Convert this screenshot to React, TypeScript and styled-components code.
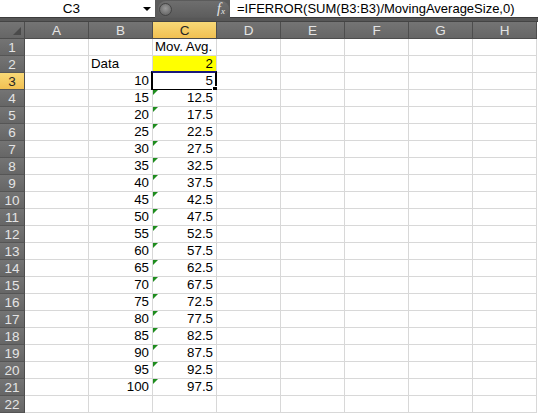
import React from 'react'
import styled, { createGlobalStyle, css } from 'styled-components'

const GlobalStyle = createGlobalStyle`
	html, body {
		margin: 0;
		padding: 0;
		background: #ffffff;
	}
	body {
		font-family: 'Liberation Sans', Arial, sans-serif;
	}
`

const COLUMNS = ['A', 'B', 'C', 'D', 'E', 'F', 'G', 'H']
const ROW_COUNT = 22

type CellData = {
	text: string
	align?: 'left' | 'right'
	highlight?: boolean
	selected?: boolean
	flagged?: boolean
}

function buildCells(): Record<string, CellData> {
	const cells: Record<string, CellData> = {
		C1: { text: 'Mov. Avg.', align: 'left' },
		B2: { text: 'Data', align: 'left' },
		C2: { text: '2', align: 'right', highlight: true },
	}
	for (let i = 0; i < 19; i++) {
		const row = i + 3
		const value = (i + 2) * 5
		cells['B' + row] = { text: String(value), align: 'right' }
		const avg = i === 0 ? 5 : value - 2.5
		cells['C' + row] = {
			text: String(avg),
			align: 'right',
			selected: row === 3,
			flagged: row > 3,
		}
	}
	return cells
}

const cells = buildCells()

export default function App() {
	const rows = Array.from({ length: ROW_COUNT }, (_, i) => i + 1)
	return (
		<>
			<GlobalStyle />
			<Window>
				<FormulaBar>
					<NameBox>
						<NameText>C3</NameText>
						<DropArrow />
					</NameBox>
					<FormulaTools>
						<Pill>
							<PillKnob />
							<Fx>
								f<sub>x</sub>
							</Fx>
						</Pill>
					</FormulaTools>
					<FormulaInput>=IFERROR(SUM(B3:B3)/MovingAverageSize,0)</FormulaInput>
				</FormulaBar>
				<Divider />
				<Sheet>
					<Corner />
					{COLUMNS.map((c) => (
						<ColHeader key={c} $active={c === 'C'}>
							{c}
						</ColHeader>
					))}
					{rows.map((r) => (
						<React.Fragment key={r}>
							<RowHeader $active={r === 3}>{r}</RowHeader>
							{COLUMNS.map((c) => {
								const cell = cells[c + r]
								return (
									<Cell
										key={c + r}
										$align={cell?.align ?? 'left'}
										$highlight={!!cell?.highlight}
										$flagged={!!cell?.flagged}
									>
										{cell?.text}
										{cell?.selected && (
											<Selection>
												<FillHandle />
											</Selection>
										)}
									</Cell>
								)
							})}
						</React.Fragment>
					))}
				</Sheet>
			</Window>
		</>
	)
}

const Window = styled.div`
	width: 538px;
	height: 414px;
	overflow: hidden;
	background: #ffffff;
`

const FormulaBar = styled.div`
	display: flex;
	height: 18px;
	background: #5b5b5b;
`

const NameBox = styled.div`
	width: 155px;
	background: #ffffff;
	border-bottom: 1px solid #3c3c3c;
	box-sizing: border-box;
	display: flex;
	align-items: center;
	font-size: 13.5px;
	color: #000;
`

const NameText = styled.span`
	flex: 1;
	text-align: center;
`

const DropArrow = styled.span`
	width: 0;
	height: 0;
	border-left: 4px solid transparent;
	border-right: 4px solid transparent;
	border-top: 4px solid #000;
	margin-right: 4px;
`

const FormulaTools = styled.div`
	width: 75px;
	display: flex;
	align-items: center;
	background: #5b5b5b;
`

const Pill = styled.div`
	display: flex;
	align-items: center;
	justify-content: space-between;
	height: 16px;
	width: 71px;
	margin-left: 3px;
	border-radius: 8px;
	background: linear-gradient(#6e6e6e, #5d5d5d);
	box-sizing: border-box;
	padding: 0 4px 0 1px;
`

const PillKnob = styled.span`
	width: 13px;
	height: 13px;
	border-radius: 50%;
	background: radial-gradient(circle at 50% 40%, #9a9a9a, #5a5a5a);
	border: 1px solid #444;
	box-sizing: border-box;
`

const Fx = styled.span`
	font-family: 'Liberation Serif', 'Times New Roman', serif;
	font-style: italic;
	font-size: 14px;
	color: #e8e8e8;
	line-height: 1;

	sub {
		font-size: 9px;
		vertical-align: -1px;
	}
`

const FormulaInput = styled.div`
	flex: 1;
	background: #ffffff;
	border-bottom: 1px solid #3c3c3c;
	box-sizing: border-box;
	font-size: 13px;
	line-height: 17px;
	padding-left: 7px;
	color: #000;
	white-space: nowrap;
	overflow: hidden;
`

const Divider = styled.div`
	height: 4px;
	background: #575757;
	border-bottom: 1px solid #444;
	box-sizing: border-box;
`

const Sheet = styled.div`
	display: grid;
	grid-template-columns: 25px repeat(8, 64px);
	grid-auto-rows: 17px;
`

const headerBase = css<{ $active?: boolean }>`
	box-sizing: border-box;
	display: flex;
	align-items: center;
	justify-content: center;
	font-size: 13.5px;
	border-right: 1px solid #4d4d4d;
	border-bottom: 1px solid #4d4d4d;
	${(p) =>
		p.$active
			? css`
					background: linear-gradient(#f9d977, #f1c052);
					color: #262626;
			  `
			: css`
					background: linear-gradient(#747474, #666666);
					color: #e4e4e4;
			  `}
`

const Corner = styled.div`
	box-sizing: border-box;
	background: linear-gradient(#747474, #666666);
	border-right: 1px solid #4d4d4d;
	border-bottom: 1px solid #4d4d4d;
	position: relative;

	&::after {
		content: '';
		position: absolute;
		right: 3px;
		bottom: 3px;
		width: 0;
		height: 0;
		border-left: 8px solid transparent;
		border-bottom: 8px solid #4a4a4a;
	}
`

const ColHeader = styled.div<{ $active?: boolean }>`
	${headerBase}
`

const RowHeader = styled.div<{ $active?: boolean }>`
	${headerBase}
	border-bottom-color: #555;
`

const Cell = styled.div<{ $align: 'left' | 'right'; $highlight: boolean; $flagged: boolean }>`
	box-sizing: border-box;
	position: relative;
	border-right: 1px solid #d8d8d8;
	border-bottom: 1px solid #d8d8d8;
	background: ${(p) => (p.$highlight ? '#ffff00' : '#ffffff')};
	font-size: 13.3px;
	line-height: 16px;
	color: #000;
	text-align: ${(p) => p.$align};
	padding: 0 3px 0 2px;
	white-space: nowrap;

	${(p) =>
		p.$flagged &&
		css`
			&::before {
				content: '';
				position: absolute;
				left: 0;
				top: 0;
				width: 0;
				height: 0;
				border-top: 5px solid #1e8c1e;
				border-right: 5px solid transparent;
			}
		`}
`

const Selection = styled.div`
	position: absolute;
	left: -2px;
	top: -2px;
	right: -1px;
	bottom: -2px;
	border: 2px solid #000;
	border-top-color: #1a1a7a;
	pointer-events: none;
`

const FillHandle = styled.span`
	position: absolute;
	right: -4px;
	bottom: -4px;
	width: 5px;
	height: 5px;
	background: #000;
	border: 1px solid #fff;
`
